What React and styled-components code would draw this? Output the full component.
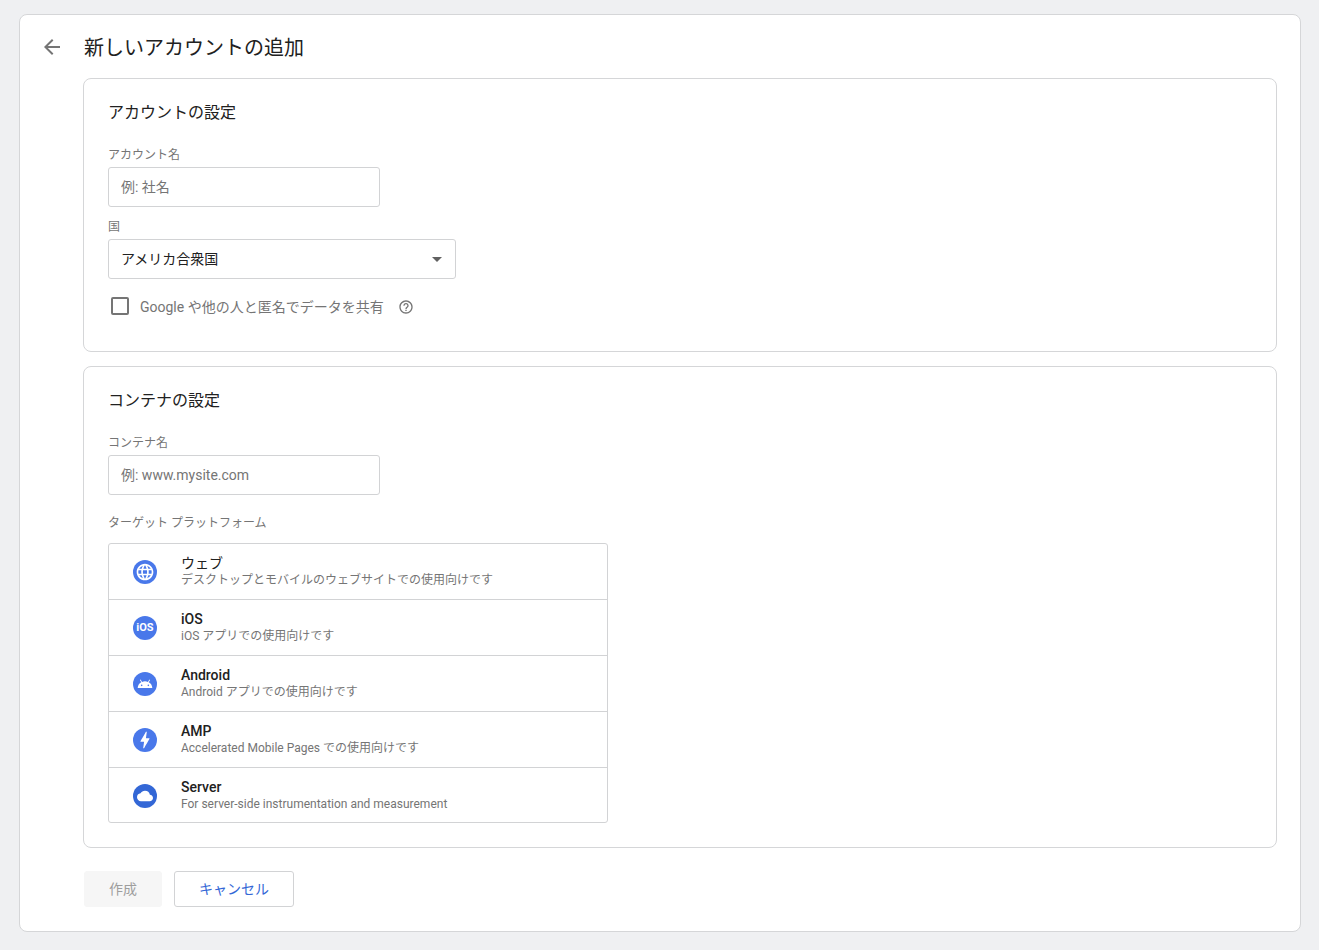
import React from "react";
import styled, { createGlobalStyle } from "styled-components";
import {
  MdAndroid,
  MdArrowBack,
  MdArrowDropDown,
  MdBolt,
  MdCloud,
  MdHelpOutline,
  MdLanguage,
} from "react-icons/md";

const platforms = [
  {
    id: "web",
    name: "ウェブ",
    weight: 400,
    description: "デスクトップとモバイルのウェブサイトでの使用向けです",
    icon: <MdLanguage size={20} />,
  },
  {
    id: "ios",
    name: "iOS",
    description: "iOS アプリでの使用向けです",
    icon: "iOS",
  },
  {
    id: "android",
    name: "Android",
    description: "Android アプリでの使用向けです",
    icon: <MdAndroid size={16} />,
  },
  {
    id: "amp",
    name: "AMP",
    description: "Accelerated Mobile Pages での使用向けです",
    icon: <MdBolt size={22} />,
  },
  {
    id: "server",
    name: "Server",
    description: "For server-side instrumentation and measurement",
    icon: <MdCloud size={16} />,
    color: "#3367d6",
  },
];

export default function App() {
  const [accountName, setAccountName] = React.useState("");
  const [containerName, setContainerName] = React.useState("");
  const [platform, setPlatform] = React.useState(null);

  const incomplete = !accountName || !containerName || !platform;

  return (
    <>
      <GlobalStyle />
      <Card>
        <Header>
          <BackButton type="button" aria-label="戻る">
            <MdArrowBack size={24} />
          </BackButton>
          <h1>新しいアカウントの追加</h1>
        </Header>
        <Form onSubmit={(e) => e.preventDefault()}>
          <Section>
            <h2>アカウントの設定</h2>
            <Label htmlFor="account">アカウント名</Label>
            <TextInput
              id="account"
              placeholder="例: 社名"
              value={accountName}
              onChange={(e) => setAccountName(e.target.value)}
            />
            <Label htmlFor="country">国</Label>
            <SelectBox>
              <select id="country">
                <option>アメリカ合衆国</option>
              </select>
              <MdArrowDropDown size={24} />
            </SelectBox>
            <ShareRow>
              <Checkbox type="checkbox" id="share" />
              <label htmlFor="share">Google や他の人と匿名でデータを共有</label>
              <HelpButton type="button" aria-label="ヘルプ">
                <MdHelpOutline size={16} />
              </HelpButton>
            </ShareRow>
          </Section>

          <Section>
            <h2>コンテナの設定</h2>
            <Label htmlFor="container">コンテナ名</Label>
            <TextInput
              id="container"
              placeholder="例: www.mysite.com"
              value={containerName}
              onChange={(e) => setContainerName(e.target.value)}
            />
            <ListTitle id="platforms">ターゲット プラットフォーム</ListTitle>
            <PlatformList aria-labelledby="platforms">
              {platforms.map((item) => (
                <li key={item.id}>
                  <PlatformButton
                    type="button"
                    aria-pressed={platform === item.id}
                    onClick={() => setPlatform(item.id)}
                  >
                    <PlatformIcon $color={item.color} aria-hidden="true">
                      {item.icon}
                    </PlatformIcon>
                    <PlatformText $weight={item.weight}>
                      <strong>{item.name}</strong>
                      <span>{item.description}</span>
                    </PlatformText>
                  </PlatformButton>
                </li>
              ))}
            </PlatformList>
          </Section>

          <Actions>
            <Button type="submit" disabled={incomplete}>
              作成
            </Button>
            <Button type="button">キャンセル</Button>
          </Actions>
        </Form>
      </Card>
    </>
  );
}

const GlobalStyle = createGlobalStyle`
  * {
    box-sizing: border-box;
  }

  body {
    margin: 0;
    padding: 14px 18px 18px 19px;
    background-color: #eff0f2;
    color: #212121;
  }

  body, button, input, select {
    font-family: Roboto, "Noto Sans CJK JP", sans-serif;
    font-size: 14px;
  }

  h1, h2 {
    margin: 0;
    font-weight: 400;
    line-height: 24px;
  }

  button {
    cursor: pointer;
  }
`;

const Card = styled.main`
  padding: 0 23px 24px;
  background-color: #fff;
  border: 1px solid #d5d6d8;
  border-radius: 8px;
`;

const Header = styled.header`
  height: 63px;
  display: flex;
  align-items: center;
  gap: 20px;

  h1 {
    padding-top: 2px;
    font-size: 20px;
  }
`;

const BackButton = styled.button`
  display: flex;
  margin-left: -3px;
  padding: 0;
  border: none;
  background: none;
  color: #757575;
`;

const Form = styled.form`
  margin-left: 40px;
  display: flex;
  flex-direction: column;
  gap: 14px;
`;

const Section = styled.section`
  padding: 22px 24px 24px;
  border: 1px solid #d5d6d8;
  border-radius: 8px;

  h2 {
    margin-bottom: 22px;
    font-size: 16px;
  }
`;

const Label = styled.label`
  display: block;
  margin-bottom: 4px;
  color: #757575;
  font-size: 12px;
  line-height: 16px;
`;

const TextInput = styled.input`
  display: block;
  width: 272px;
  max-width: 100%;
  height: 40px;
  margin-bottom: 12px;
  padding: 0 12px;
  border: 1px solid #d2d3d5;
  border-radius: 3px;

  &::placeholder {
    color: #757575;
  }
`;

const SelectBox = styled.div`
  width: 348px;
  max-width: 100%;
  display: grid;
  align-items: center;
  color: #616161;

  select,
  svg {
    grid-area: 1 / 1;
  }

  select {
    height: 40px;
    padding: 0 32px 0 12px;
    appearance: none;
    background: #fff;
    border: 1px solid #d2d3d5;
    border-radius: 3px;
    color: #212121;
  }

  svg {
    justify-self: end;
    margin-right: 7px;
    pointer-events: none;
  }
`;

const ShareRow = styled.div`
  height: 40px;
  margin-top: 8px;
  padding-left: 3px;
  display: flex;
  align-items: center;
  color: #757575;

  label {
    padding-bottom: 2px;
  }
`;

const Checkbox = styled.input`
  width: 18px;
  height: 18px;
  margin: 0 11px 2px 0;
  appearance: none;
  border: 2px solid #757575;
  border-radius: 2px;

  &:checked {
    background-color: #3367d6;
    border-color: #3367d6;
  }
`;

const HelpButton = styled.button`
  display: flex;
  margin-left: 14px;
  padding: 0;
  border: none;
  background: none;
  color: #757575;
`;

const ListTitle = styled.div`
  margin: 20px 0 12px;
  color: #757575;
  font-size: 12px;
  line-height: 16px;
`;

const PlatformList = styled.ul`
  width: 500px;
  max-width: 100%;
  margin: 0;
  padding: 0;
  list-style: none;
  border: 1px solid #d2d3d5;
  border-radius: 3px;

  li + li {
    border-top: 1px solid #d2d3d5;
  }

  li:last-child button {
    height: 54px;
    padding-top: 1px;
  }
`;

const PlatformButton = styled.button`
  width: 100%;
  height: 55px;
  padding: 0 24px;
  display: flex;
  align-items: center;
  gap: 24px;
  border: none;
  background: none;
  text-align: left;
`;

const PlatformIcon = styled.span`
  width: 24px;
  height: 24px;
  flex: none;
  display: flex;
  align-items: center;
  justify-content: center;
  border-radius: 50%;
  background-color: ${({ $color }) => $color || "#4978ea"};
  color: #fff;
  font-size: 11px;
  font-weight: 700;
`;

const PlatformText = styled.span`
  padding-bottom: 1px;
  display: flex;
  flex-direction: column;
  gap: 1px;
  line-height: 16px;

  strong {
    color: #212121;
    font-weight: ${({ $weight }) => $weight || 500};
  }

  span {
    color: #757575;
    font-size: 12px;
  }
`;

const Actions = styled.div`
  margin-top: 9px;
  padding-left: 1px;
  display: flex;
  gap: 12px;
`;

const Button = styled.button`
  height: 36px;
  padding: 0 24px 2px;
  background-color: #fff;
  border: 1px solid #d2d3d5;
  border-radius: 3px;
  color: #3367d6;

  &:disabled {
    background-color: #f6f6f6;
    border-color: #f6f6f6;
    color: #9e9e9e;
    cursor: default;
  }
`;
